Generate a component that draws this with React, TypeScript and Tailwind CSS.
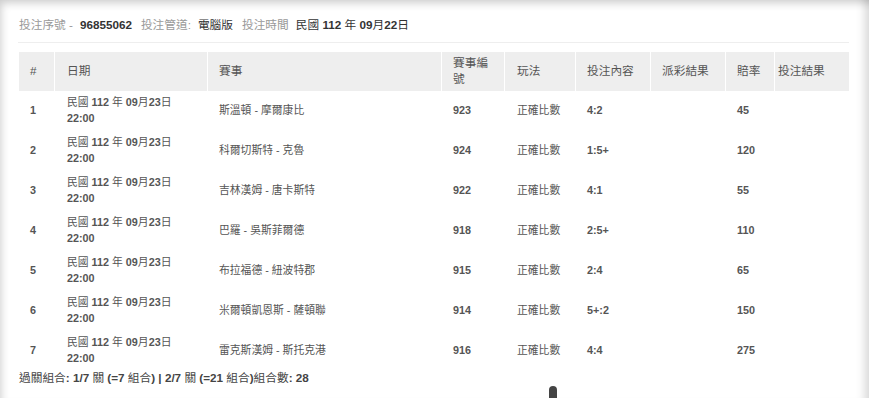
import React from "react";

const rows = [
  { n: 1, match: "斯溫頓 - 摩爾康比", id: "923", bet: "4:2", odds: "45" },
  { n: 2, match: "科爾切斯特 - 克魯", id: "924", bet: "1:5+", odds: "120" },
  { n: 3, match: "吉林漢姆 - 唐卡斯特", id: "922", bet: "4:1", odds: "55" },
  { n: 4, match: "巴羅 - 吳斯菲爾德", id: "918", bet: "2:5+", odds: "110" },
  { n: 5, match: "布拉福德 - 紐波特郡", id: "915", bet: "2:4", odds: "65" },
  { n: 6, match: "米爾頓凱恩斯 - 薩頓聯", id: "914", bet: "5+:2", odds: "150" },
  { n: 7, match: "雷克斯漢姆 - 斯托克港", id: "916", bet: "4:4", odds: "275" },
];

const cols = "grid grid-cols-[35px_153px_234px_63px_71px_75px_75px_49px_75px]";

function Date({ day }: { day: string }) {
  return (
    <span>
      <span className="font-normal">民國</span> <b>112</b> <span className="font-normal">年</span>{" "}
      <b>09</b>
      <span className="font-normal">月</span>
      <b>{day}</b>
      <span className="font-normal">日</span>
    </span>
  );
}

export default function App() {
  return (
    <div
      className="relative w-[869px] h-[398px] overflow-hidden bg-white flex text-[#555]"
      style={{ fontFamily: '"Liberation Sans", Arial, "Noto Sans CJK TC", sans-serif' }}
    >
      <div className="flex-1 flex flex-col shadow-[inset_7px_9px_9px_-6px_rgba(0,0,0,0.2),inset_-12px_0_10px_-8px_rgba(0,0,0,0.16)]">
        <div className="pl-[19px] pr-[20px] pt-[17px]">
          <div className="text-[11.7px] leading-[16.7px] flex gap-[7px] items-baseline">
            <span className="text-[#999]">投注序號 -</span>
            <span className="font-bold text-[#333]">96855062</span>
            <span className="text-[#999] ml-[2px]">投注管道:</span>
            <span className="text-[#333]">電腦版</span>
            <span className="text-[#999] ml-[2px]">投注時間</span>
            <span className="text-[#333]">
              <Date day="22" />
            </span>
          </div>
          <div className="mt-[8px] h-px bg-[#eeeeee] -ml-[1px]" />
          <div className="mt-[9px] w-[830px]">
            <div className={`${cols} bg-[#eeeeee] h-[39px] text-[11.7px] leading-[16.7px] text-[#555]`}>
              <div className="pl-[11px] flex items-center">#</div>
              <div className="border-l border-white pl-[12px] flex items-center">日期</div>
              <div className="border-l border-white pl-[11px] flex items-center">賽事</div>
              <div className="border-l border-white pl-[11px] pr-[10px] flex items-center">賽事編號</div>
              <div className="border-l border-white pl-[12px] flex items-center">玩法</div>
              <div className="border-l border-white pl-[11px] flex items-center">投注內容</div>
              <div className="border-l border-white pl-[11px] flex items-center">派彩結果</div>
              <div className="border-l border-white pl-[11px] flex items-center">賠率</div>
              <div className="border-l border-white pl-[3px] flex items-center">投注結果</div>
            </div>
            {rows.map((r) => (
              <div key={r.n} className={`${cols} h-[40px] text-[10.8px] leading-[15.4px] text-[#555]`}>
                <div className="pl-[11px] flex items-center font-bold">{r.n}</div>
                <div className="pl-[13px] flex flex-col justify-center">
                  <Date day="23" />
                  <b>22:00</b>
                </div>
                <div className="pl-[12px] flex items-center">{r.match}</div>
                <div className="pl-[12px] flex items-center font-bold">{r.id}</div>
                <div className="pl-[13px] flex items-center">正確比數</div>
                <div className="pl-[12px] flex items-center font-bold">{r.bet}</div>
                <div className="pl-[12px] flex items-center" />
                <div className="pl-[12px] flex items-center font-bold">{r.odds}</div>
                <div className="pl-[12px] flex items-center" />
              </div>
            ))}
          </div>
          <div className="text-[11.7px] leading-[16.7px] text-[#444] mt-[-1px]">
            <span>過關組合</span>
            <b>: 1/7 </b>
            <span>關</span>
            <b> (=7 </b>
            <span>組合</span>
            <b>) | 2/7 </b>
            <span>關</span>
            <b> (=21 </b>
            <span>組合</span>
            <b>)</b>
            <span>組合數</span>
            <b>: 28</b>
          </div>
        </div>
      </div>
      <div className="w-[4px] bg-[#e3e3e3]" />
      <div className="absolute left-[549px] top-[386px] w-[8px] h-[14px] rounded-t-[4px] bg-[#444]" />
    </div>
  );
}
